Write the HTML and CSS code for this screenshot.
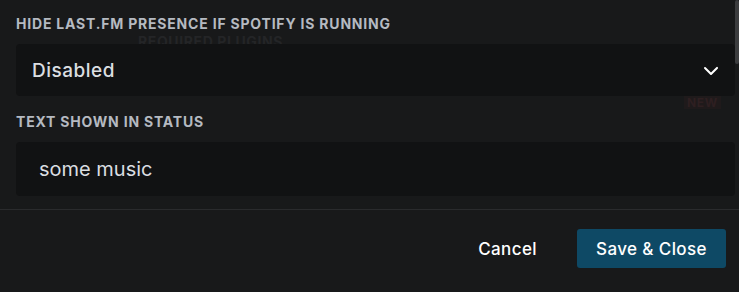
FILE: index.html
```html
<!DOCTYPE html>
<html>
<head>
<meta charset="utf-8">
<link rel="stylesheet" href="styles.css">
</head>
<body>
<div class="modal">
  <div class="ghost ghost-plugins">REQUIRED PLUGINS</div>
  <div class="ghost ghost-new">NEW</div>
  <div class="content">
    <div class="label">Hide Last.fm presence if spotify is running</div>
    <div class="select">
      <span class="select-value">Disabled</span>
      <svg class="chevron" width="24" height="24" viewBox="0 0 24 24"><path d="M5.3 9.3a1 1 0 0 1 1.4 0L12 14.58l5.3-5.3a1 1 0 1 1 1.4 1.42l-6 6a1 1 0 0 1-1.4 0l-6-6a1 1 0 0 1 0-1.42Z" fill="#ffffff"/></svg>
    </div>
    <div class="label label-2">Text shown in status</div>
    <div class="input">some music</div>
  </div>
  <div class="footer">
    <button class="btn btn-cancel">Cancel</button>
    <button class="btn btn-save">Save &amp; Close</button>
  </div>
  <div class="scrollbar"></div>
</div>
</body>
</html>
```
FILE: styles.css
```css
html, body {
  margin: 0;
  padding: 0;
  background: #18191a;
}
body {
  width: 739px;
  height: 292px;
  overflow: hidden;
  font-family: Inter, "Noto Sans", sans-serif;
}
.modal {
  position: relative;
  width: 739px;
  height: 292px;
  display: flex;
  flex-direction: column;
}
.ghost {
  position: absolute;
  font-weight: 700;
  color: #242527;
  font-size: 14px;
  letter-spacing: 0.6px;
  text-transform: uppercase;
}
.ghost-plugins {
  left: 138px;
  top: 33px;
}
.ghost-new {
  left: 684px;
  top: 96px;
  font-size: 12px;
  line-height: 13px;
  padding: 0 3px;
  color: #2e1f21;
  background: #1f1a1b;
}
.content {
  position: relative;
  padding: 16px 4px 0 16px;
  height: 193px;
}
.label {
  font-size: 14px;
  line-height: 16px;
  font-weight: 700;
  letter-spacing: 0.8px;
  text-transform: uppercase;
  color: #b5bac1;
  margin-bottom: 12px;
}
.label-2 {
  margin-top: 18px;
  margin-bottom: 12px;
}
.select {
  height: 52px;
  background: #111213;
  border-radius: 4px;
  display: flex;
  align-items: center;
  justify-content: space-between;
  padding: 0 12px 0 16px;
}
.select-value {
  font-size: 19px;
  font-weight: 500;
  letter-spacing: 0.5px;
  color: #dbdee1;
}
.chevron {
  display: block;
}
.input {
  height: 54px;
  background: #111213;
  border-radius: 4px;
  display: flex;
  align-items: center;
  padding: 0 23px;
  font-size: 20px;
  color: #dbdee1;
}
.footer {
  position: relative;
  border-top: 1px solid #2a2b2d;
  display: flex;
  justify-content: flex-end;
  align-items: flex-start;
  padding: 19px 13px 0 0;
  flex: 1;
}
.btn {
  font-family: Inter, "Noto Sans", sans-serif;
  font-size: 17px;
  font-weight: 500;
  letter-spacing: 0.4px;
  border: none;
  height: 39px;
  border-radius: 3px;
  cursor: pointer;
}
.btn-cancel {
  background: transparent;
  color: #ffffff;
  padding: 0 20px;
  margin-right: 20px;
}
.btn-save {
  background: #0e4965;
  color: #ffffff;
  width: 149px;
  padding: 0;
}
.scrollbar {
  position: absolute;
  right: 0;
  top: 0;
  width: 4px;
  height: 64px;
  background: #3c3d3f;
  border-radius: 2px;
}
```
